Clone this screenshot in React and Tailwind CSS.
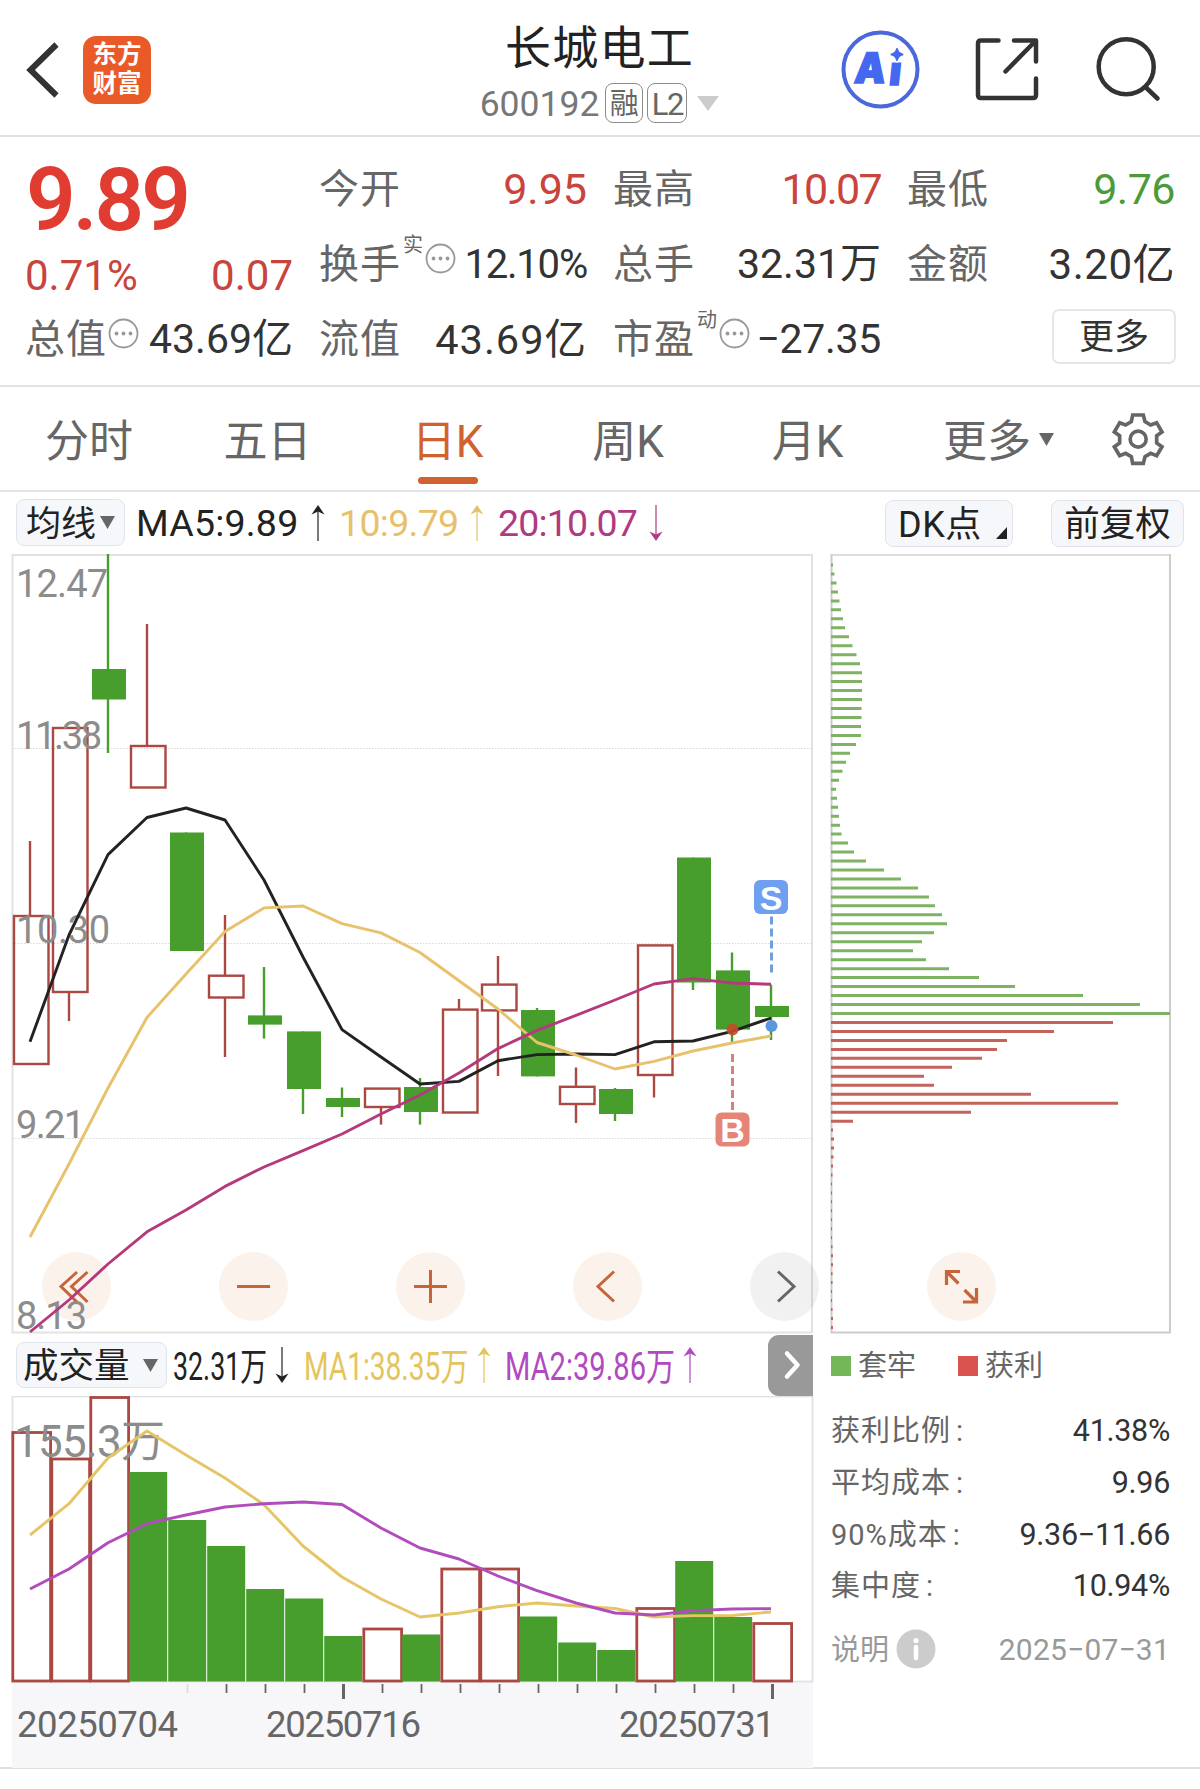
import React from "react";

const STEP = 39;
const cx = (i) => 30 + STEP * i;

// [rising, high, bodyTop, bodyBottom, low]
const candles = [
  [1, 841, 916, 1064, 1064],
  [1, 728, 728, 992, 1021],
  [0, 554, 669, 699.5, 753],
  [1, 624, 746, 787.5, 787.5],
  [0, 832.5, 832.5, 951, 951],
  [1, 915, 975.7, 997.5, 1057],
  [0, 967, 1015.4, 1024.6, 1038.6],
  [0, 1031.4, 1031.4, 1089, 1114],
  [0, 1087.5, 1098, 1107, 1117],
  [1, 1088.6, 1088.6, 1107, 1124.6],
  [0, 1078, 1087, 1112, 1124.6],
  [1, 999, 1009.6, 1112.5, 1112.5],
  [1, 956, 984.6, 1010.4, 1076],
  [0, 1008, 1010, 1076.4, 1076.4],
  [1, 1067.5, 1086.8, 1104, 1123],
  [0, 1088, 1089, 1114, 1121],
  [1, 945.4, 945.4, 1075, 1097.5],
  [0, 857.5, 857.5, 982.5, 990],
  [0, 952.5, 970.4, 1029.6, 1042.5],
  [0, 984.6, 1006, 1017, 1040],
];
const ma5 = [1041.8, 935, 854.6, 817.5, 808, 820, 880, 957, 1029.6, 1057, 1084, 1081.4, 1060.7, 1054.6, 1054, 1054.6, 1041.8, 1041, 1031.4, 1018];
const ma10 = [1237, 1164, 1088, 1017.5, 974, 931.4, 907.9, 906, 923.6, 932.9, 952.5, 980.7, 1009, 1042.5, 1055, 1069, 1061.4, 1051, 1043, 1036];
const ma20 = [1332, 1300, 1264, 1231.8, 1210, 1186.4, 1167, 1150.7, 1134, 1114, 1095, 1073, 1048.6, 1030.4, 1015.4, 1000, 984, 978.6, 983, 984.3];
const volumes = [
  [1, 1432.5], [1, 1459], [1, 1397.5], [0, 1472], [0, 1520], [0, 1546], [0, 1589], [0, 1598.5], [0, 1636], [1, 1629],
  [0, 1634.5], [1, 1569], [1, 1569], [0, 1616.5], [0, 1642.5], [0, 1650], [1, 1608.5], [0, 1561], [0, 1617], [1, 1623.5],
];
const vol1 = [1535, 1503.7, 1458, 1431, 1455, 1478, 1504.7, 1546, 1577, 1599, 1617, 1613, 1606.7, 1603, 1606, 1608.5, 1617, 1615.6, 1615.5, 1612];
const vol2 = [1589, 1569, 1542.7, 1523.7, 1515, 1507, 1503.7, 1502, 1504.5, 1528, 1548, 1559, 1576, 1590.6, 1603, 1613, 1615, 1610.6, 1609, 1608.6];
const trapped = [
  2, 3.5, 5.5, 7, 8.5, 10, 12, 14, 18, 21.5, 25.5, 29, 31, 31, 31, 31, 30.5, 30.5, 30, 30, 25, 19, 15, 11.5, 8, 5, 6, 7, 8, 9, 10.5, 17, 23,
  35, 53, 70, 87, 98, 104, 111, 116, 103, 91, 82, 95, 118, 148, 184, 252, 309, 339,
];
const profit = [
  282, 223, 176, 166, 151, 121, 93, 103, 200, 287, 140, 22, 2, 3, 3, 2.5, 2, 1.5, 1, 1, 1, 1, 1, 1, 1, 1.5, 2, 2, 1.5, 1.5, 1, 1, 1.5, 2, 2,
];

const RED = "#ab4842";
const GREEN = "#479e2d";
const points = (ys) => ys.map((y, i) => `${cx(i)},${y}`).join(" ");

function Dots() {
  return (
    <svg className="h-[31px] w-[31px] shrink-0" viewBox="0 0 31 31">
      <circle cx="15.5" cy="15.5" r="14" fill="none" stroke="#999" strokeWidth="1.8" />
      <circle cx="8.5" cy="15.5" r="1.9" fill="#999" />
      <circle cx="15.5" cy="15.5" r="1.9" fill="#999" />
      <circle cx="22.5" cy="15.5" r="1.9" fill="#999" />
    </svg>
  );
}

function Arrow({ down }) {
  return (
    <svg className={`h-[36px] w-[14px] shrink-0 ${down ? "rotate-180" : ""}`} viewBox="0 0 14 36">
      <path d="M7 3V36" stroke="currentColor" strokeWidth="1.5" opacity="0.8" />
      <path d="M7 0L13.5 9.5L7 6.5L0.500 9.500Z" fill="currentColor" />
    </svg>
  );
}

function Caret({ className }) {
  return (
    <svg className={className} viewBox="0 0 16 13" preserveAspectRatio="none">
      <path d="M0 0H16L8 13Z" fill="currentColor" />
    </svg>
  );
}

function Stat({ label, sup, dots, value, tone = "text-[#333]", track = "" }) {
  return (
    <div className="flex h-[75px] items-center justify-between pt-[2px]">
      <div className="-ml-[1px] flex items-center text-[40px] leading-none text-[#666]">
        <span className="w-[81px] whitespace-nowrap tracking-[1px]">{label}</span>
        {sup && <span className="-mt-10 ml-[3px] mr-[2px] text-[20px]">{sup}</span>}
        {dots && <span className={sup ? "-mt-3" : "-mt-3 ml-[2px]"}><Dots /></span>}
      </div>
      <span className={`-mr-[1px] whitespace-nowrap leading-none ${tone} ${track || "text-[41px]"}`}>{value}</span>
    </div>
  );
}

function Header() {
  return (
    <header className="flex h-[137px] border-b-2 border-[#e2e2e2]">
      <div className="flex w-[460px] items-start pl-[26px] pt-[36px]">
        <svg className="mt-[5px] h-[58px] w-[34px]" viewBox="0 0 34 58">
          <path d="M30.500 3.500L4.500 29L30.500 54.500" fill="none" stroke="#333" strokeWidth="6" />
        </svg>
        <div className="ml-[23px] flex h-[68px] w-[68px] flex-col items-center justify-center gap-[4px] rounded-[13px] bg-[#ea5a29] pb-[2px] text-[24.500px] font-bold leading-[25px] text-white">
          <span>东方</span>
          <span>财富</span>
        </div>
      </div>
      <div className="flex w-[279px] flex-col items-center">
        <h1 className="mt-[23px] text-[46px] leading-[50px] tracking-[1.300px] text-[#222]">长城电工</h1>
        <div className="mt-[10px] flex items-center">
          <span className="mt-[4px] text-[35.5px] leading-none text-[#777]">600192</span>
          <span className="ml-[6px] flex h-[40px] w-[38px] items-center justify-center rounded-[8px] border-[1.5px] border-[#8c8c8c] pt-[2px] text-[29px] leading-none text-[#666]">融</span>
          <span className="ml-[4px] flex h-[40px] w-[40px] items-center justify-center rounded-[8px] border-[1.5px] border-[#8c8c8c] pt-[2px] text-[31px] leading-none tracking-[-1.500px] text-[#666]">L2</span>
          <Caret className="ml-[10px] h-[15px] w-[22px] text-[#ccc]" />
        </div>
      </div>
      <div className="flex flex-1 items-start pl-[102px] pt-[30px]">
        <svg className="h-[80px] w-[80px]" viewBox="0 0 80 80">
          <circle cx="39.500" cy="39.500" r="37" fill="none" stroke="#4a68dc" strokeWidth="4" />
          <text transform="skewX(-6)" y="53" fontFamily="Inter, sans-serif" fontWeight="900" fill="#4468f0" stroke="#4468f0" strokeWidth="1.500">
            <tspan x="18" fontSize="42" textLength="31" lengthAdjust="spacingAndGlyphs">A</tspan>
            <tspan x="53" y="55" fontSize="40">i</tspan>
          </text>
          <circle cx="56" cy="24" r="8.500" fill="#fff" />
          <path d="M56 19Q57 23.500 61.500 24.500Q57 25.500 56 30Q55 25.500 50.500 24.500Q55 23.500 56 19Z" fill="#4468f0" stroke="#4468f0" strokeWidth="2" strokeLinejoin="round" />
        </svg>
        <svg className="ml-[53px] mt-[7px] h-[66px] w-[66px]" viewBox="0 0 66 66" fill="none" stroke="#333" strokeWidth="4.500" strokeLinecap="round" strokeLinejoin="round">
          <path d="M24.500 3.500H7Q4 3.500 4 6.500V58Q4 61 7 61H59Q62 61 62 58V41.500" />
          <path d="M40 3.500H62V24.500M61 4.500L31.500 34.500" />
        </svg>
        <svg className="ml-[54px] mt-[4px] h-[70px] w-[70px]" viewBox="0 0 70 70" fill="none" stroke="#333" strokeWidth="4.500" strokeLinecap="round">
          <circle cx="32.200" cy="32.700" r="27.500" />
          <path d="M52.500 54L63.500 64.500" />
        </svg>
      </div>
    </header>
  );
}

function Quote() {
  return (
    <section className="grid h-[250px] grid-cols-4 gap-x-7 border-b-2 border-[#e4e4e4] px-[26px] pt-[14px]">
      <div>
        <div className="h-[96px] pt-[3px] text-[87px] font-semibold leading-[92px] tracking-[-3px] text-[#e03c31]">9.89</div>
        <div className="-mx-[1px] flex h-[54px] items-center justify-between pt-[4px] text-[42px] leading-none text-[#c8443c]">
          <span>0.71%</span>
          <span>0.07</span>
        </div>
        <Stat label="总值" dots value="43.69亿" />
      </div>
      <div>
        <Stat label="今开" value="9.95" tone="text-[#c8443c]" track="text-[43px]" />
        <Stat label="换手" sup="实" dots value="12.10%" track="text-[40px] tracking-[-1.200px]" />
        <Stat label="流值" value="43.69亿" track="text-[41.500px] tracking-[1px]" />
      </div>
      <div>
        <Stat label="最高" value="10.07" tone="text-[#c8443c]" track="text-[43px] tracking-[-1.700px]" />
        <Stat label="总手" value="32.31万" />
        <Stat label="市盈" sup="动" dots value="−27.35" track="text-[41px] tracking-[-0.300px]" />
      </div>
      <div>
        <Stat label="最低" value="9.76" tone="text-[#4d9a3a]" track="text-[43px] tracking-[-0.500px]" />
        <Stat label="金额" value="3.20亿" track="text-[42px] tracking-[0.500px]" />
        <div className="-mr-[2px] ml-auto mt-[8px] flex h-[55px] w-[124px] items-center justify-center rounded-[7px] border-2 border-[#e6e6e6] pt-[2px] text-[35px] leading-none text-[#333]">更多</div>
      </div>
    </section>
  );
}

function Tabs() {
  return (
    <nav className="flex h-[105px] items-start border-b-2 border-[#e4e4e4] pt-[31px] text-[44px] leading-[48px] text-[#666]">
      <span className="w-[178px] text-center">分时</span>
      <span className="w-[179px] text-center">五日</span>
      <div className="flex w-[181px] flex-col items-center text-[#d0622f]">
        <span>日K</span>
        <span className="mt-[11px] h-[7px] w-[60px] rounded-full bg-[#d0622f]" />
      </div>
      <span className="w-[180px] text-center">周K</span>
      <span className="w-[179px] text-center">月K</span>
      <div className="flex w-[206px] items-center pl-[46px]">
        <span>更多</span>
        <Caret className="-mt-[5px] ml-[8px] h-[13px] w-[15px]" />
      </div>
      <svg className="ml-[7px] mt-[-7px] h-[56px] w-[56px]" viewBox="31 31 168 168" fill="none" stroke="#666" strokeWidth="11">
        <path d="M60 66L78 73L95 63L99 43H131L136 63L153 73L171 66L187 94L171 105V127L187 138L171 165L153 158L136 168L131 188H99L95 168L78 158L60 165L44 138L60 127V105L44 94Z" />
        <circle cx="115.500" cy="115.500" r="24" />
      </svg>
    </nav>
  );
}

function MaBar() {
  return (
    <div className="flex h-[61px] items-center pl-[16px] text-[37.500px] leading-none text-[#222]">
      <div className="flex h-[47px] w-[109px] items-center rounded-[8px] border-[1.5px] border-[#e0e4ea] bg-[#f6f7fa] pl-[9px] text-[35px]">
        <span className="mt-[3px]">均线</span>
        <Caret className="ml-[4px] h-[13px] w-[15px] text-[#666]" />
      </div>
      <span className="ml-[11px] mt-[3px] w-[163px] whitespace-nowrap tracking-[0.200px]">MA5:9.89</span>
      <span className="ml-[12px] flex"><Arrow /></span>
      <div className="ml-[14px] flex w-[145px] items-center justify-between text-[#e8c06a]">
        <span className="mt-[3px] tracking-[-0.700px]">10:9.79</span>
        <Arrow />
      </div>
      <div className="ml-[14px] flex w-[165px] items-center justify-between text-[#b03a80]">
        <span className="mt-[3px] tracking-[-0.800px]">20:10.07</span>
        <Arrow down />
      </div>
      <div className="ml-[222px] mt-[1px] flex h-[47px] w-[128px] shrink-0 items-center rounded-[8px] border-[1.5px] border-[#e0e4ea] bg-[#f6f7fa] pl-[12px] text-[36px]">
        <span className="mt-[3px] whitespace-nowrap tracking-[0.500px]">DK点</span>
        <svg className="ml-auto mr-[5px] mt-[20px] h-[12px] w-[11px]" viewBox="0 0 11 12">
          <path d="M11 0V12H0Z" fill="#222" />
        </svg>
      </div>
      <div className="ml-[38px] mt-[1px] flex h-[47px] w-[133px] shrink-0 items-center justify-center rounded-[8px] border-[1.5px] border-[#e0e4ea] bg-[#f6f7fa] pt-[3px] text-[35.500px]">
        前复权
      </div>
    </div>
  );
}

function KChart() {
  const labels = [["12.47", 597, 92], ["11.38", 749, 86], ["10.30", 943, 94], ["9.21", 1138, 69], ["8.13", 1329, 71]];
  return (
    <svg className="block h-[782px] w-[830px] overflow-visible" viewBox="0 552 830 782" fontFamily="Roboto, sans-serif">
      <rect x="12.500" y="555" width="799.500" height="777.500" fill="#fff" stroke="#e2e2e2" strokeWidth="2" />
      {[748.5, 943.5, 1138.5].map((y) => (
        <path key={y} d={`M12 ${y}H812`} stroke="#d9d9d9" strokeDasharray="1.500 1.500" />
      ))}
      {[76.5, 253.5, 430.5, 607.5, 784.5].map((x, i) => (
        <circle key={x} cx={x} cy="1286.500" r="34.500" fill={i === 4 ? "#000" : "#fbf2eb"} opacity={i === 4 ? 0.055 : 1} />
      ))}
      <g fill="none" stroke="#c5653a" strokeWidth="3">
        <path d="M77 1272L61 1286.500L77 1302M87.500 1272L71.500 1286.500L87.500 1302" />
        <path d="M237 1286.500H270M414 1286.500H447M430.500 1270V1303" />
        <path d="M614 1271.500L598 1286.500L614 1301.500" />
        <path d="M778 1271.500L794 1286.500L778 1301.500" stroke="#666" />
      </g>
      {candles.map(([up, hi, top, bottom, lo], i) => {
        const x = cx(i);
        return up ? (
          <g key={i} fill="none" stroke={RED} strokeWidth="2.400">
            <path d={`M${x} ${hi}V${top}M${x} ${bottom}V${lo}`} />
            <rect x={x - 16} y={top} width="34.500" height={bottom - top} />
          </g>
        ) : (
          <g key={i}>
            <path d={`M${x} ${hi}V${lo}`} stroke={GREEN} strokeWidth="2.400" />
            <rect x={x - 16} y={top} width="34" height={bottom - top} fill={GREEN} />
          </g>
        );
      })}
      <g fill="#8c8c8c" fontSize="38">
        {labels.map(([t, y, w]) => (
          <text key={t} x="16" y={y} textLength={w}>{t}</text>
        ))}
      </g>
      <g fill="none" strokeWidth="2.900" strokeLinejoin="round">
        <polyline points={points(ma5)} stroke="#222" />
        <polyline points={points(ma10)} stroke="#e8c16c" />
        <polyline points={points(ma20)} stroke="#b43a7c" />
      </g>
      <path d="M771.500 916.500V973" stroke="#6fa0dc" strokeWidth="3" strokeDasharray="8 4" />
      <path d="M732.500 1054V1112" stroke="#d38277" strokeWidth="3" strokeDasharray="8 4" />
      <circle cx="771.500" cy="1026" r="6" fill="#5b96e0" />
      <circle cx="732.500" cy="1029.500" r="6" fill="#c54a2c" opacity="0.9" />
      <rect x="754" y="880" width="34" height="34" rx="6" fill="#6f9ff0" />
      <rect x="715.500" y="1112.500" width="34" height="34" rx="6" fill="#e58577" />
      <g fill="#fff" fontFamily="'Liberation Sans', sans-serif" fontWeight="bold" fontSize="34" textAnchor="middle">
        <text x="771" y="909.500">S</text>
        <text x="732.500" y="1141.500">B</text>
      </g>
    </svg>
  );
}

function ChipChart() {
  const row = (i) => 565 + 8.97 * i;
  return (
    <svg className="block h-[782px] w-[360px]" viewBox="830 552 360 782">
      <path d="M831 555H1170" stroke="#ddd" strokeWidth="2" />
      <path d="M831.500 554V1332.500H1170V554" fill="none" stroke="#ccc" strokeWidth="2" />
      <path d={trapped.map((w, i) => `M831 ${row(i)}h${w}`).join("")} stroke="#7fb363" strokeWidth="3" />
      <path d={profit.map((w, i) => `M831 ${row(i + 51)}h${w}`).join("")} stroke="#c4625c" strokeWidth="3" />
      <circle cx="961.500" cy="1286.500" r="34.500" fill="#fbf2eb" />
      <g fill="none" stroke="#c5653a" strokeWidth="3.200">
        <path d="M960 1271.500H946.500V1285M946.500 1271.500L958.500 1283.500" />
        <path d="M963 1302H976.500V1288M976.500 1302L964.500 1290" />
      </g>
    </svg>
  );
}

function VolumeBar() {
  return (
    <div className="flex h-[62px] items-center pl-[16px] text-[38px] leading-none text-[#222]">
      <div className="flex h-[46px] w-[151px] shrink-0 items-center rounded-[8px] border-[1.5px] border-[#e0e4ea] bg-[#f6f7fa] pl-[6px] text-[35.5px]">
        <span className="mt-[4px]">成交量</span>
        <Caret className="ml-[13px] h-[13px] w-[15px] text-[#666]" />
      </div>
      <span className="ml-[6px] mt-[3px] w-[93px] whitespace-nowrap"><span className="inline-block origin-left scale-x-[0.705]">32.31万</span></span>
      <span className="ml-[9px] flex"><Arrow down /></span>
      <div className="ml-[15px] flex w-[187px] items-center justify-between text-[#e4c45c]">
        <span className="mt-[3px] w-[160px] whitespace-nowrap"><span className="inline-block origin-left scale-x-[0.74]">MA1:38.35万</span></span>
        <Arrow />
      </div>
      <div className="ml-[14px] flex w-[192px] items-center justify-between text-[#b14ac0]">
        <span className="mt-[3px] w-[165px] whitespace-nowrap"><span className="inline-block origin-left scale-x-[0.765]">MA2:39.86万</span></span>
        <Arrow />
      </div>
      <div className="ml-auto mr-[17px] flex h-[61px] w-[45px] items-center justify-center rounded-l-[11px] bg-[#999] pl-[2px]">
        <svg className="h-[30px] w-[20px]" viewBox="0 0 20 30">
          <path d="M5 3.500L15.500 15L5 26.500" fill="none" stroke="#fff" strokeWidth="4.500" strokeLinecap="round" strokeLinejoin="round" />
        </svg>
      </div>
    </div>
  );
}

function VolumeChart() {
  return (
    <svg className="block h-[373px] w-[830px]" viewBox="0 1396 830 373" fontFamily="Roboto, 'Noto Sans CJK SC', sans-serif">
      <rect x="12" y="1682" width="801" height="86" fill="#f7f7fa" />
      <rect x="12.500" y="1396.500" width="800" height="285" fill="#fff" stroke="#e2e2e2" strokeWidth="1.800" />
      {volumes.map(([up, y], i) =>
        up ? (
          <rect key={i} x={12.8 + STEP * i} y={y} width="37.800" height={1681 - y} fill="#fff" stroke={RED} strokeWidth="2.800" />
        ) : (
          <rect key={i} x={12.2 + STEP * i} y={y} width="38" height={1681.5 - y} fill={GREEN} />
        )
      )}
      <text x="14" y="1457" fontSize="44" fill="#8c8c8c" textLength="151">155.3万</text>
      <g fill="none" strokeWidth="2.900" strokeLinejoin="round">
        <polyline points={points(vol1)} stroke="#e6c566" />
        <polyline points={points(vol2)} stroke="#b24cbc" />
      </g>
      {Array.from({ length: 16 }, (_, k) => k + 4).map((i) => {
        const major = i === 8 || i === 19;
        return (
          <path
            key={i}
            d={`M${31.5 + STEP * i} 1684V${major ? 1699 : 1693}`}
            stroke={i === 4 ? "#ddd" : "#666"}
            strokeWidth={major ? 3 : 1.8}
          />
        );
      })}
      <g fill="#666" fontSize="36.500">
        <text x="17" y="1737" textLength="161">20250704</text>
        <text x="266" y="1737" textLength="155">20250716</text>
        <text x="619" y="1737" textLength="156">20250731</text>
      </g>
    </svg>
  );
}

function CostRow({ label, value, className }) {
  return (
    <div className={`flex items-center justify-between ${className}`}>
      <span className="text-[29px] tracking-[1px] text-[#666]">
        {label}
        <span className="ml-[5px]">:</span>
      </span>
      <span className="text-[30.500px] tracking-[-0.300px] text-[#333]">{value}</span>
    </div>
  );
}

function CostPanel() {
  return (
    <div className="w-[340px] pl-[1px] leading-none">
      <div className="flex h-[62px] items-center text-[29px] text-[#666]">
        <span className="mt-[1px] h-[20px] w-[20px] bg-[#73b758]" />
        <span className="ml-[7px] mt-[3px]">套牢</span>
        <span className="ml-[42px] mt-[1px] h-[20px] w-[20px] bg-[#d9544f]" />
        <span className="ml-[7px] mt-[3px]">获利</span>
      </div>
      <div className="pt-[9px]">
        <CostRow className="h-[52px]" label="获利比例" value="41.38%" />
        <CostRow className="h-[52px]" label="平均成本" value="9.96" />
        <CostRow className="h-[52px]" label="90%成本" value="9.36−11.66" />
        <CostRow className="h-[51px]" label="集中度" value="10.94%" />
        <div className="mt-[7px] flex h-[60px] items-center text-[29px] text-[#999]">
          <span className="mt-[2px]">说明</span>
          <svg className="ml-[7px] h-[40px] w-[40px]" viewBox="0 0 40 40">
            <circle cx="20" cy="20" r="19.500" fill="#ccc" />
            <circle cx="20" cy="11.500" r="2.600" fill="#fff" />
            <path d="M20 18V29" stroke="#fff" strokeWidth="4.500" strokeLinecap="round" />
          </svg>
          <span className="ml-auto mt-[1px] text-[30px] tracking-[0.200px]">2025−07−31</span>
        </div>
      </div>
    </div>
  );
}

export default function App() {
  return (
    <div className="h-[1789px] w-[1200px] overflow-hidden bg-white font-['Roboto','Noto_Sans_CJK_SC',sans-serif]">
      <Header />
      <Quote />
      <Tabs />
      <MaBar />
      <main className="-mt-[1px] flex h-[1217px] border-b-2 border-[#e0e0e0]">
        <div className="w-[830px]">
          <KChart />
          <VolumeBar />
          <VolumeChart />
        </div>
        <div className="w-[370px]">
          <ChipChart />
          <CostPanel />
        </div>
      </main>
    </div>
  );
}
